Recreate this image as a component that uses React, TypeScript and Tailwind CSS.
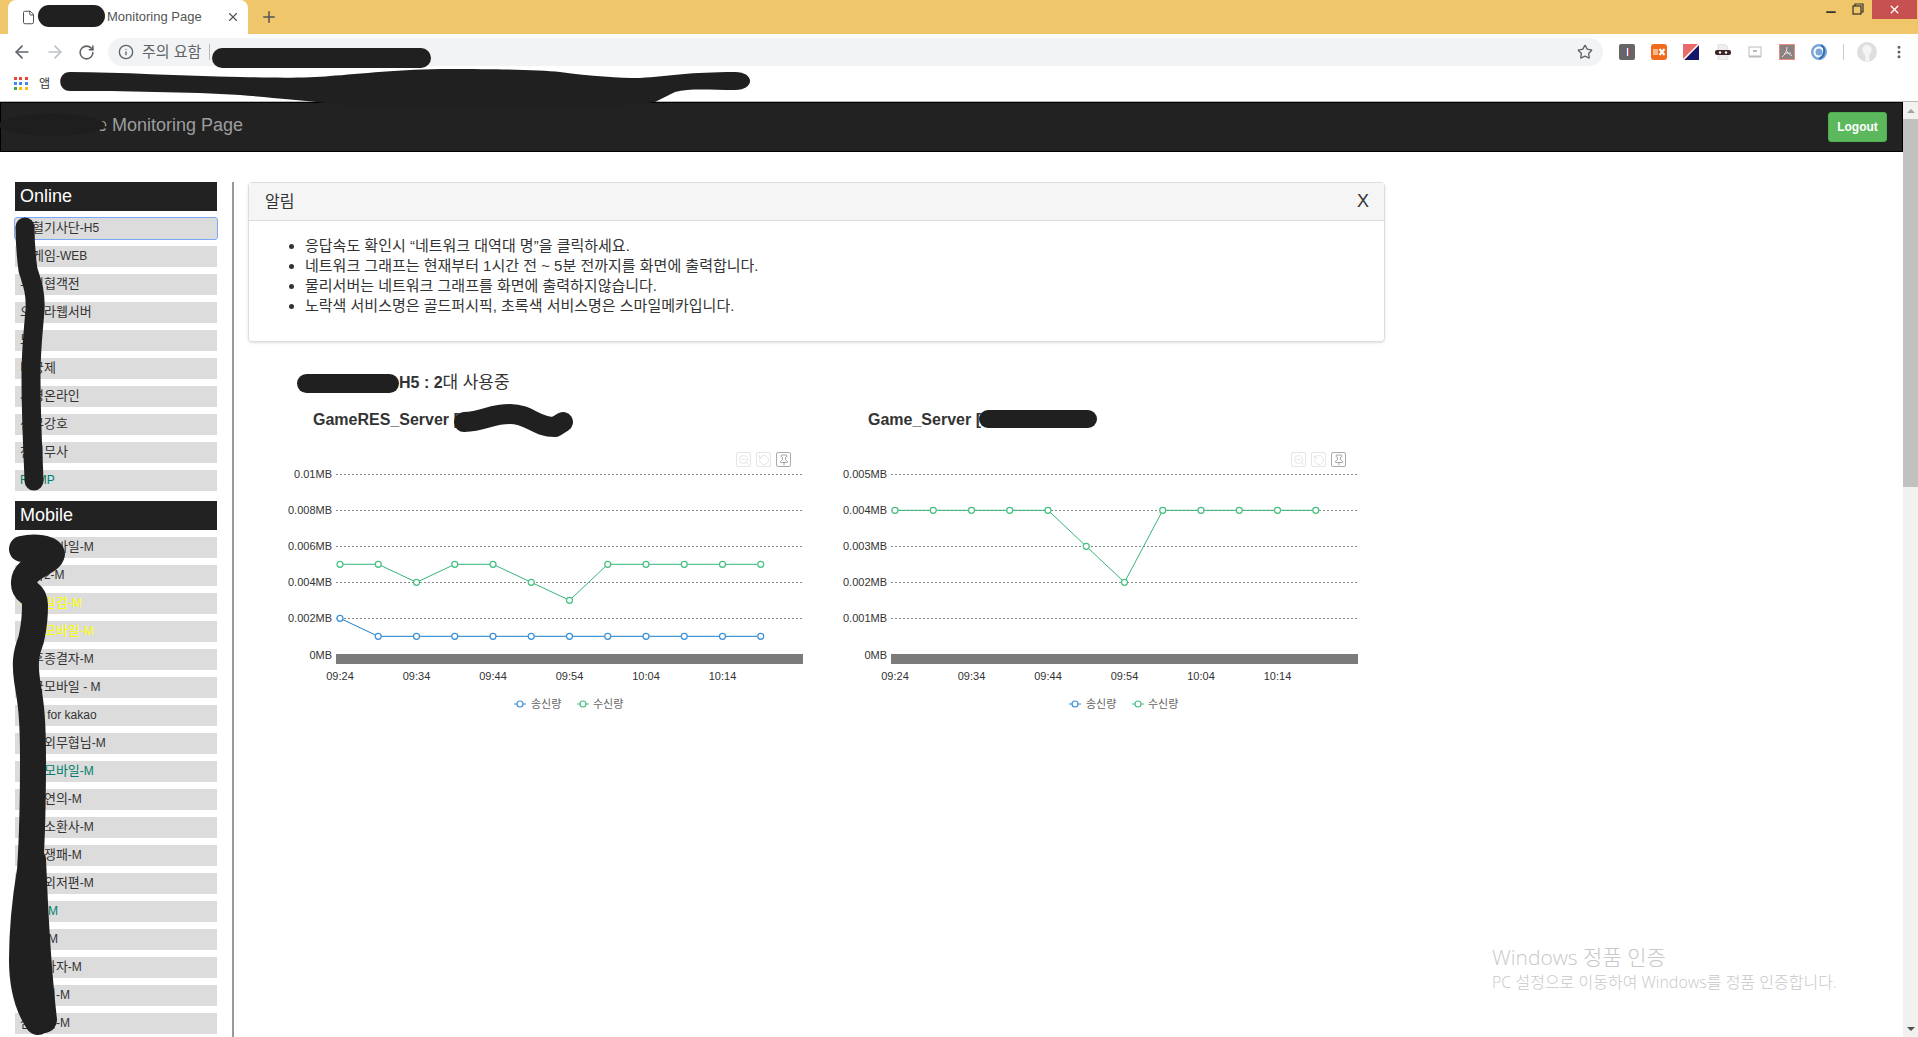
import { ArrowLeft, ArrowRight, File, Info, Minus, MoreVertical, Pin, Plus, RotateCcw, RotateCw, Star, X, ZoomOut } from 'lucide-react';
import { ReactNode } from 'react';

type Item = { name: string; color?: string };

const online: Item[] = [
  { name: '철혈기사단-H5' },
  { name: '온게임-WEB' },
  { name: '무림협객전' },
  { name: '오로라웹서버' },
  { name: '모' },
  { name: '미궁제' },
  { name: '사령온라인' },
  { name: '신무강호' },
  { name: '천현무사' },
  { name: 'RAMP', color: 'text-[#00806a]' },
];

const mobile: Item[] = [
  { name: '천하모바일-M' },
  { name: '천하2-M' },
  { name: '천하일검-M', color: 'text-[#ffff00]' },
  { name: '천룡모바일-M', color: 'text-[#ffff00]' },
  { name: '최후종결자-M' },
  { name: '삼국모바일 - M' },
  { name: '신선 for kakao' },
  { name: '강호외무협님-M' },
  { name: '인연모바일-M', color: 'text-[#00806a]' },
  { name: '삼국연의-M' },
  { name: '불멸소환사-M' },
  { name: '바람쟁패-M' },
  { name: '강호외저편-M' },
  { name: '천마-M', color: 'text-[#00806a]' },
  { name: '무림-M' },
  { name: '천무라자-M' },
  { name: '강호전-M' },
  { name: '삼국지-M' },
];

const notices = [
  '응답속도 확인시 “네트워크 대역대 명”을 클릭하세요.',
  '네트워크 그래프는 현재부터 1시간 전 ~ 5분 전까지를 화면에 출력합니다.',
  '물리서버는 네트워크 그래프를 화면에 출력하지않습니다.',
  '노락색 서비스명은 골드퍼시픽, 초록색 서비스명은 스마일메카입니다.',
];

// hangul in Noto runs narrower than the original font, so it gets its own size
function Ko({ text, className }: { text: string; className: string }) {
  return (
    <>
      {text.split(/([\uac00-\ud7a3]+)/).map((part, i) =>
        /[\uac00-\ud7a3]/.test(part) ? <span key={i} className={className}>{part}</span> : part,
      )}
    </>
  );
}

function SideHeader({ title }: { title: string }) {
  return <div className="h-[29px] bg-[#222] pl-[5px] text-[18px] leading-[29px] text-white">{title}</div>;
}

function SideItem({ item, focused }: { item: Item; focused?: boolean }) {
  return (
    <div
      className={`mt-[7px] h-[21px] bg-[#dcdcdc] pl-[5px] text-[12px] leading-[20px] whitespace-nowrap ${item.color ?? 'text-[#333]'} ${focused ? 'rounded-[2px] outline-1 outline-[#7aa7f5]' : ''}`}
    >
      <Ko text={item.name} className="text-[13px]" />
    </div>
  );
}

const CHART_LEFT = 48;
const CHART_RIGHT = 515;
const FIRST_X = 52;
const STEP = 38.25;
const ZERO_Y = 214.3;
const GRID_Y = [34.5, 70.5, 106.5, 142.5, 178.5];
const TIMES = ['09:24', '09:34', '09:44', '09:54', '10:04', '10:14'];

function Series({ values, unit, line, dot }: { values: number[]; unit: number; line: string; dot: string }) {
  const pts = values.map((v, i) => [FIRST_X + i * STEP, ZERO_Y - v * unit]);
  return (
    <g>
      <polyline points={pts.map(p => p.join(',')).join(' ')} fill="none" stroke={line} strokeWidth="1" />
      {pts.map(([x, y]) => (
        <circle key={x} cx={x} cy={y} r="3" fill="#fff" stroke={dot} strokeWidth="1.2" />
      ))}
    </g>
  );
}

function ToolIcon({ children, dark }: { children: ReactNode; dark?: boolean }) {
  return (
    <div className={`flex h-[15px] w-[15px] items-center justify-center rounded-[2px] border ${dark ? 'border-[#aaa] text-[#888]' : 'border-[#e6e6e6] text-[#ddd]'}`}>
      {children}
    </div>
  );
}

function Chart({ title, labels, unit, sent, received }: {
  title: string;
  labels: string[];
  unit: number;
  sent?: number[];
  received: number[];
}) {
  return (
    <div className="w-[555px] shrink-0">
      <div className="h-[22px] pl-[25px] text-[16px] leading-[24px] font-bold text-[#333]">{title} [</div>
      <div className="relative mt-[10px] h-[290px]">
        <div className="absolute top-[12px] left-[448px] flex gap-[5px]">
          <ToolIcon><ZoomOut size={12} strokeWidth={1.5} /></ToolIcon>
          <ToolIcon><RotateCcw size={12} strokeWidth={1.5} /></ToolIcon>
          <ToolIcon dark><Pin size={12} strokeWidth={1.5} /></ToolIcon>
        </div>
        <svg width="555" height="290" className="block">
          {GRID_Y.map((y, i) => (
            <g key={y}>
              <line x1={CHART_LEFT} x2={CHART_RIGHT} y1={y} y2={y} stroke="#888" strokeDasharray="2 2" />
              <text x={44} y={y + 3} textAnchor="end" fontSize="11" fill="#333">{labels[i]}</text>
            </g>
          ))}
          <text x={44} y={219} textAnchor="end" fontSize="11" fill="#333">0MB</text>
          <rect x={CHART_LEFT} y={214} width={CHART_RIGHT - CHART_LEFT} height={10} fill="#7b7b7b" />
          {TIMES.map((t, i) => (
            <text key={t} x={FIRST_X + i * 2 * STEP} y={240} textAnchor="middle" fontSize="11" fill="#333">{t}</text>
          ))}
          {sent && <Series values={sent} unit={unit} line="#1b7fcc" dot="#3a8fd8" />}
          <Series values={received} unit={unit} line="#35b577" dot="#45c07f" />

          <line x1={226} x2={238} y1={264} y2={264} stroke="#3a8fd8" />
          <circle cx={232} cy={264} r="3" fill="#fff" stroke="#3a8fd8" strokeWidth="1.2" />
          <text x={243} y={268} fontSize="11" fill="#666">송신량</text>
          <line x1={289} x2={301} y1={264} y2={264} stroke="#45c07f" />
          <circle cx={295} cy={264} r="3" fill="#fff" stroke="#45c07f" strokeWidth="1.2" />
          <text x={305} y={268} fontSize="11" fill="#666">수신량</text>
        </svg>
      </div>
    </div>
  );
}

function ExtensionIcons() {
  return (
    <div className="ml-4 flex items-center gap-4">
      <svg width="16" height="16"><rect width="16" height="16" rx="2" fill="#666" /><rect x="7" y="4" width="1" height="8" fill="#5b6ee1" /><rect x="8" y="4" width="1" height="8" fill="#fff" /><rect x="9" y="4" width="1" height="8" fill="#e25555" /></svg>
      <svg width="16" height="16"><rect width="16" height="16" rx="3" fill="#f26b1d" /><rect x="2" y="5" width="5" height="6" fill="#f9b98c" /><path d="M8.5 5l5 6M13.5 5l-5 6" stroke="#fff" strokeWidth="2" /></svg>
      <svg width="16" height="16"><rect width="16" height="16" fill="#e86a6a" /><path d="M16 1V16H1z" fill="#16166b" /><path d="M16 0L0 16" stroke="#fff" strokeWidth="1.5" /></svg>
      <svg width="16" height="16"><path d="M3 0h7l3 3v13H3z" fill="#eee" stroke="#ccc" strokeWidth="0.5" /><rect x="0" y="6" width="16" height="5" rx="2" fill="#3a2424" /><circle cx="5" cy="8.5" r="1.2" fill="#fff" /><circle cx="11" cy="8.5" r="1.2" fill="#fff" /></svg>
      <svg width="16" height="16"><rect x="2" y="3" width="12" height="9" fill="#fff" stroke="#bbb" /><rect x="6" y="6" width="4" height="2" fill="#bbb" /><rect x="2" y="12" width="12" height="1.5" fill="#bbb" /></svg>
      <svg width="16" height="16"><rect x="0.5" y="0.5" width="15" height="15" fill="#8a8280" stroke="#e88b80" /><path d="M8 3c0 4-2 8-5 10M8 7c1 3 3 4 5 4.5M5 10c2-1 4-1 7-1" stroke="#e8e0de" strokeWidth="1" fill="none" /></svg>
      <svg width="16" height="16"><circle cx="8" cy="8" r="8" fill="#7aa7d8" /><circle cx="8" cy="8" r="4.5" fill="none" stroke="#fff" strokeWidth="2" /><path d="M10 1C15 4 14 12 8 15" fill="none" stroke="#2f6fb2" strokeWidth="2" /></svg>
    </div>
  );
}

function Folder() {
  return <div className="h-[11px] w-[12px] rounded-[1px] border border-[#e8c860] bg-[#f8e08e]" />;
}

function Browser() {
  const dots = ['#ea4335', '#ea4335', '#ea4335', '#4285f4', '#4285f4', '#4285f4', '#34a853', '#fbbc05', '#fbbc05'];
  return (
    <div className="h-[102px] border-b border-[#b8b8b8] bg-white">
      {/* tab strip */}
      <div className="flex h-[34px] bg-[#efc76a]">
        <div className="ml-[8px] flex h-[34px] w-[240px] items-center rounded-t-lg bg-white">
          <File size={15} strokeWidth={1.5} className="ml-[13px] text-[#444]" />
          <span className="ml-[71px] text-[13px] text-[#555]">Monitoring Page</span>
          <X size={14} className="ml-[24px] text-[#555]" />
        </div>
        <Plus size={18} className="mt-[8px] ml-[12px] text-[#555]" />
        <div className="flex-1" />
        <Minus size={14} strokeWidth={3} className="mt-[5px] text-[#333]" />
        <svg width="12" height="12" className="mt-[3px] ml-[14px]" fill="none" stroke="#333" strokeWidth="1.2">
          <rect x="1" y="3" width="8" height="8" />
          <path d="M3 3V1h8v8H9" />
        </svg>
        <div className="ml-[8px] mr-[1px] flex h-[19px] w-[45px] items-center justify-center bg-[#c75050]">
          <X size={13} strokeWidth={2.5} className="text-white" />
        </div>
      </div>

      {/* toolbar */}
      <div className="flex h-[36px] items-center">
        <ArrowLeft size={20} className="ml-[12px] text-[#5f6368]" />
        <ArrowRight size={20} className="ml-[13px] text-[#bdc1c6]" />
        <RotateCw size={17} strokeWidth={2.2} className="ml-[13px] text-[#5f6368]" />
        <div className="ml-[13px] flex h-[28px] w-[1495px] items-center rounded-full bg-[#f1f3f4]">
          <Info size={16} className="ml-[10px] text-[#5f6368]" />
          <span className="ml-[8px] text-[15px] text-[#5f6368]">주의 요함</span>
          <div className="ml-[8px] h-[16px] w-px bg-[#bbb]" />
          <div className="flex-1" />
          <Star size={16} strokeWidth={2} className="mr-[10px] text-[#5f6368]" />
        </div>
        <ExtensionIcons />
        <div className="ml-[16px] h-[16px] w-px bg-[#ccc]" />
        <svg width="20" height="20" className="ml-[13px]">
          <circle cx="10" cy="10" r="10" fill="#dedede" />
          <path d="M10 3c3.5 0 5 2.5 4.5 6-.3 2-2 3-2.500 5l.5 5.500H8l.5-5.500c-.5-2-2.500-3-3-5C5 5.500 6.500 3 10 3z" fill="#f4f4f4" />
        </svg>
        <MoreVertical size={16} strokeWidth={2.5} className="ml-[14px] text-[#5f6368]" />
      </div>

      {/* bookmarks */}
      <div className="flex h-[31px] items-center pb-[4px]">
        <div className="ml-[14px] grid w-[14px] grid-cols-3 gap-[2px]">
          {dots.map((c, i) => (
            <div key={i} className="h-[3px] w-[3px]" style={{ background: c }} />
          ))}
        </div>
        <span className="ml-[11px] text-[12px] text-[#333]">앱</span>
        <div className="ml-[186px]"><Folder /></div>
        <div className="ml-[53px]"><Folder /></div>
        <div className="ml-[277px]"><Folder /></div>
        <span className="ml-[6px] text-[12px] text-[#333]">공공</span>
      </div>
    </div>
  );
}

// the black marker strokes somebody drew over the screenshot
function Scrawl() {
  return (
    <svg width="1918" height="1037" className="pointer-events-none absolute top-0 left-0" fill="none" stroke="#202020" strokeLinecap="round" strokeLinejoin="round">
      <path d="M49 16H94" strokeWidth="22" />
      <path d="M222 58H421" strokeWidth="20" />
      <path
        d="M70 72C120 72 180 76 240 77C280 78 310 78 330 76C360 74 400 69 450 69C500 69 540 70 560 72C590 76 620 78 640 78C670 76 690 72 735 72C755 72 755 90 735 90C710 90 690 88 675 92L655 102C620 106 590 108 520 108C450 108 400 108 370 108C340 104 300 100 240 95C190 92 120 91 70 91C57 91 57 72 70 72Z"
        fill="#202020"
        stroke="none"
      />
      <ellipse cx="52" cy="125" rx="53" ry="11" fill="#1e1e1e" stroke="none" />
      <path d="M25 227C25 245 26 255 28 270C33 285 36 295 35 310C33 335 31 350 31 375C31 420 33 450 34 481" strokeWidth="19" />
      <path d="M22 549C35 546 50 548 52 554C50 564 25 566 24 582C23 595 35 590 35 605C35 625 33 630 31 640C25 655 25 665 27 680C30 700 33 710 33 760C33 800 32 840 30 870C25 900 22 930 22 960C22 990 30 1010 38 1022" strokeWidth="26" />
      <path d="M33 860C35 900 36 950 44 1020" strokeWidth="26" />
      <path d="M464 422C485 421 490 414 510 414C530 414 535 427 555 427L563 422" strokeWidth="20" />
      <path d="M988 419H1088" strokeWidth="18" />
    </svg>
  );
}

export default function App() {
  return (
    <div className="relative h-[1037px] w-full overflow-hidden bg-white [font-family:'Liberation_Sans','Noto_Sans_CJK_KR',sans-serif]">
      <Browser />

      <div className="flex h-[935px]">
        <div className="min-w-0 flex-1">
          {/* navbar */}
          <div className="flex h-[50px] items-center justify-between border border-black bg-[#222]">
            <span className="mb-[4px] ml-[96px] text-[18px] text-[#9d9d9d]">e Monitoring Page</span>
            <button className="mr-[15px] h-[30px] w-[59px] rounded-[3px] border border-[#4cae4c] bg-[#5cb85c] text-[12px] font-bold text-white">
              Logout
            </button>
          </div>

          <div className="flex pt-[30px]">
            {/* sidebar */}
            <div className="w-[232px] shrink-0 pr-[15px] pl-[15px]">
              <SideHeader title="Online" />
              {online.map((item, i) => (
                <SideItem key={item.name} item={item} focused={i === 0} />
              ))}
              <div className="h-[10px]" />
              <SideHeader title="Mobile" />
              {mobile.map(item => (
                <SideItem key={item.name} item={item} />
              ))}
              <div className="mt-[7px] h-[21px] bg-[#dcdcdc]" />
            </div>

            {/* main */}
            <div className="min-h-[900px] flex-1 border-l-2 border-[#999] pl-[14px]">
              <div className="w-[1137px] rounded-[4px] border border-[#ddd] shadow-sm">
                <div className="flex h-[38px] items-center justify-between border-b border-[#ddd] bg-[#f5f5f5] pr-[15px] pl-[16px] text-[#333]">
                  <span className="text-[16px]">알림</span>
                  <span className="text-[18px]">X</span>
                </div>
                <ul className="h-[120px] list-disc pt-[15px] pl-[56px] text-[15px] leading-[20px] text-[#333]">
                  {notices.map(n => (
                    <li key={n}>{n}</li>
                  ))}
                </ul>
              </div>

              <div className="mt-[30px] ml-[49px] flex h-[22px] items-center text-[16px] font-bold text-[#333]">
                <div className="h-[19px] w-[102px] rounded-full bg-[#202020]" />
                <span><Ko text="H5 : 2대 사용중" className="text-[17px] font-normal" /></span>
              </div>

              <div className="mt-[14px] ml-[40px] flex">
                <Chart
                  title="GameRES_Server"
                  labels={['0.01MB', '0.008MB', '0.006MB', '0.004MB', '0.002MB']}
                  unit={18}
                  sent={[2, 1, 1, 1, 1, 1, 1, 1, 1, 1, 1, 1]}
                  received={[5, 5, 4, 5, 5, 4, 3, 5, 5, 5, 5, 5]}
                />
                <Chart
                  title="Game_Server"
                  labels={['0.005MB', '0.004MB', '0.003MB', '0.002MB', '0.001MB']}
                  unit={36}
                  received={[4, 4, 4, 4, 4, 3, 2, 4, 4, 4, 4, 4]}
                />
              </div>
            </div>
          </div>
        </div>

        {/* page scrollbar */}
        <div className="flex w-[15px] shrink-0 flex-col bg-[#f1f1f1]">
          <div className="flex h-[17px] items-center justify-center">
            <div className="h-0 w-0 border-x-[4px] border-b-[4px] border-x-transparent border-b-[#a3a3a3]" />
          </div>
          <div className="h-[368px] bg-[#c1c1c1]" />
          <div className="flex-1" />
          <div className="flex h-[17px] items-center justify-center">
            <div className="h-0 w-0 border-x-[4px] border-t-[4px] border-x-transparent border-t-[#505050]" />
          </div>
        </div>
      </div>

      <Scrawl />

      {/* activation watermark */}
      <div className="absolute top-[943px] left-[1492px] [font-family:'Open_Sans','Noto_Sans_CJK_KR',sans-serif] font-light whitespace-nowrap text-[#c8c8c8]">
        <div className="text-[21px] leading-[29px]">Windows 정품 인증</div>
        <div className="text-[16px] leading-[20px]">PC 설정으로 이동하여 Windows를 정품 인증합니다.</div>
      </div>
    </div>
  );
}
